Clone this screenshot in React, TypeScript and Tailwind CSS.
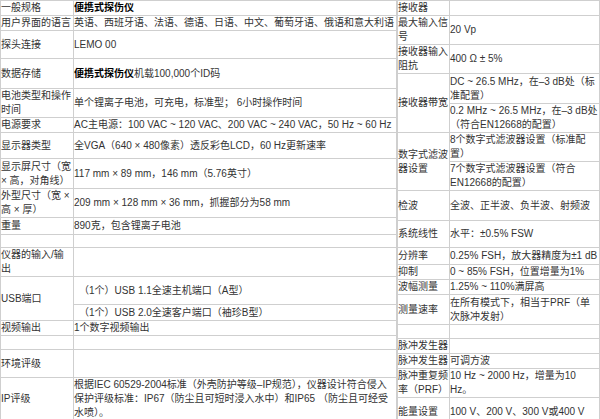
const F = { fontFamily: '"Liberation Sans","Noto Sans CJK SC",sans-serif' };
const td = 'border border-[#cfcfcf] px-0 align-middle leading-[14px]';

function L({ h, a, b, bold }: { h: number; a: string; b: React.ReactNode; bold?: boolean }) {
  return (
    <tr style={{ height: h }}>
      <td className={td}>{a}</td>
      <td className={td + (bold ? ' font-bold text-black' : '')}>{b}</td>
    </tr>
  );
}

export default function App() {
  return (
    <div className="w-[600px] h-[419px] overflow-hidden bg-white flex items-start text-[10px] text-[#333]" style={F}>
      <table className="w-[397px] shrink-0 border-collapse table-fixed">
        <colgroup><col className="w-[73px]" /><col /></colgroup>
        <tbody>
          <L h={15} a="一般规格" b="便携式探伤仪" bold />
          <L h={15} a="用户界面的语言" b="英语、西班牙语、法语、德语、日语、中文、葡萄牙语、俄语和意大利语" />
          <L h={28} a="探头连接" b="LEMO 00" />
          <L h={30} a="数据存储" b={<><b className="text-black">便携式探伤仪</b>机载100,000个ID码</>} />
          <L h={29} a="电池类型和操作时间" b="单个锂离子电池，可充电，标准型； 6小时操作时间" />
          <L h={15} a="电源要求" b="AC主电源：100 VAC ~ 120 VAC、200 VAC ~ 240 VAC，50 Hz ~ 60 Hz" />
          <L h={26} a="显示器类型" b="全VGA（640 × 480像素）透反彩色LCD，60 Hz更新速率" />
          <L h={30} a="显示屏尺寸（宽 × 高，对角线）" b="117 mm × 89 mm，146 mm（5.76英寸）" />
          <L h={27} a="外型尺寸（宽 × 高 × 厚）" b="209 mm × 128 mm × 36 mm，抓握部分为58 mm" />
          <L h={17} a="重量" b="890克，包含锂离子电池" />
          <L h={13} a="" b="" />
          <L h={15} a="仪器的输入/输出" b="" />
          <tr style={{ height: 28 }}>
            <td className={td} rowSpan={2}>USB端口</td>
            <td className={td + ' pl-[5px]'}>（1个）USB 1.1全速主机端口（A型）</td>
          </tr>
          <tr style={{ height: 16 }}>
            <td className={td + ' pl-[5px]'}>（1个）USB 2.0全速客户端口（袖珍B型）</td>
          </tr>
          <L h={14} a="视频输出" b="1个数字视频输出" />
          <L h={14} a="" b="" />
          <L h={28} a="环境评级" b="" />
          <L h={28} a="IP评级" b="根据IEC 60529-2004标准（外壳防护等级–IP规范），仪器设计符合侵入保护评级标准：IP67（防尘且可短时浸入水中）和IP65 （防尘且可经受水喷）。" />
          <L h={22} a="爆炸性气氛" b="通过了美军标准MIL-STD-810F方法511.4程序I中规定的测试。" />
          <L h={20} a="" b="" />
        </tbody>
      </table>
      <table className="w-[203px] shrink-0 border-collapse table-fixed">
        <colgroup><col className="w-[52px]" /><col /></colgroup>
        <tbody>
          <L h={15} a="接收器" b="" />
          <L h={15} a="最大输入信号" b="20 Vp" />
          <L h={28} a="接收器输入阻抗" b="400 Ω ± 5%" />
          <tr style={{ height: 30 }}>
            <td className={td} rowSpan={2}>接收器带宽</td>
            <td className={td}>DC ~ 26.5 MHz，在–3 dB处（标准配置）</td>
          </tr>
          <tr style={{ height: 29 }}>
            <td className={td}>0.2 MHz ~ 26.5 MHz，在–3 dB处（符合EN12668的配置）</td>
          </tr>
          <tr style={{ height: 15 }}>
            <td className={td} rowSpan={2}>数字式滤波器设置</td>
            <td className={td}>8个数字式滤波器设置（标准配置）</td>
          </tr>
          <tr style={{ height: 26 }}>
            <td className={td}>7个数字式滤波器设置（符合EN12668的配置）</td>
          </tr>
          <L h={30} a="检波" b="全波、正半波、负半波、射频波" />
          <L h={27} a="系统线性" b="水平：±0.5% FSW" />
          <L h={17} a="分辨率" b="0.25% FSH，放大器精度为±1 dB" />
          <L h={13} a="抑制" b="0 ~ 85% FSH，位置增量为1%" />
          <L h={15} a="波幅测量" b="1.25% ~ 110%满屏高" />
          <L h={30} a="测量速率" b="在所有模式下，相当于PRF（单次脉冲发射）" />
          <L h={14} a="" b="" />
          <L h={14} a="脉冲发生器" b="" />
          <L h={14} a="脉冲发生器" b="可调方波" />
          <L h={28} a="脉冲重复频率（PRF）" b="10 Hz ~ 2000 Hz，增量为10 Hz。" />
          <L h={28} a="能量设置" b="100 V、200 V、300 V或400 V" />
          <L h={30} a="脉冲宽度" b="25 ns ~ 5000 ns（0.1 MHz）范围内可调，利用PerfectSquare技术" />
        </tbody>
      </table>
    </div>
  );
}
